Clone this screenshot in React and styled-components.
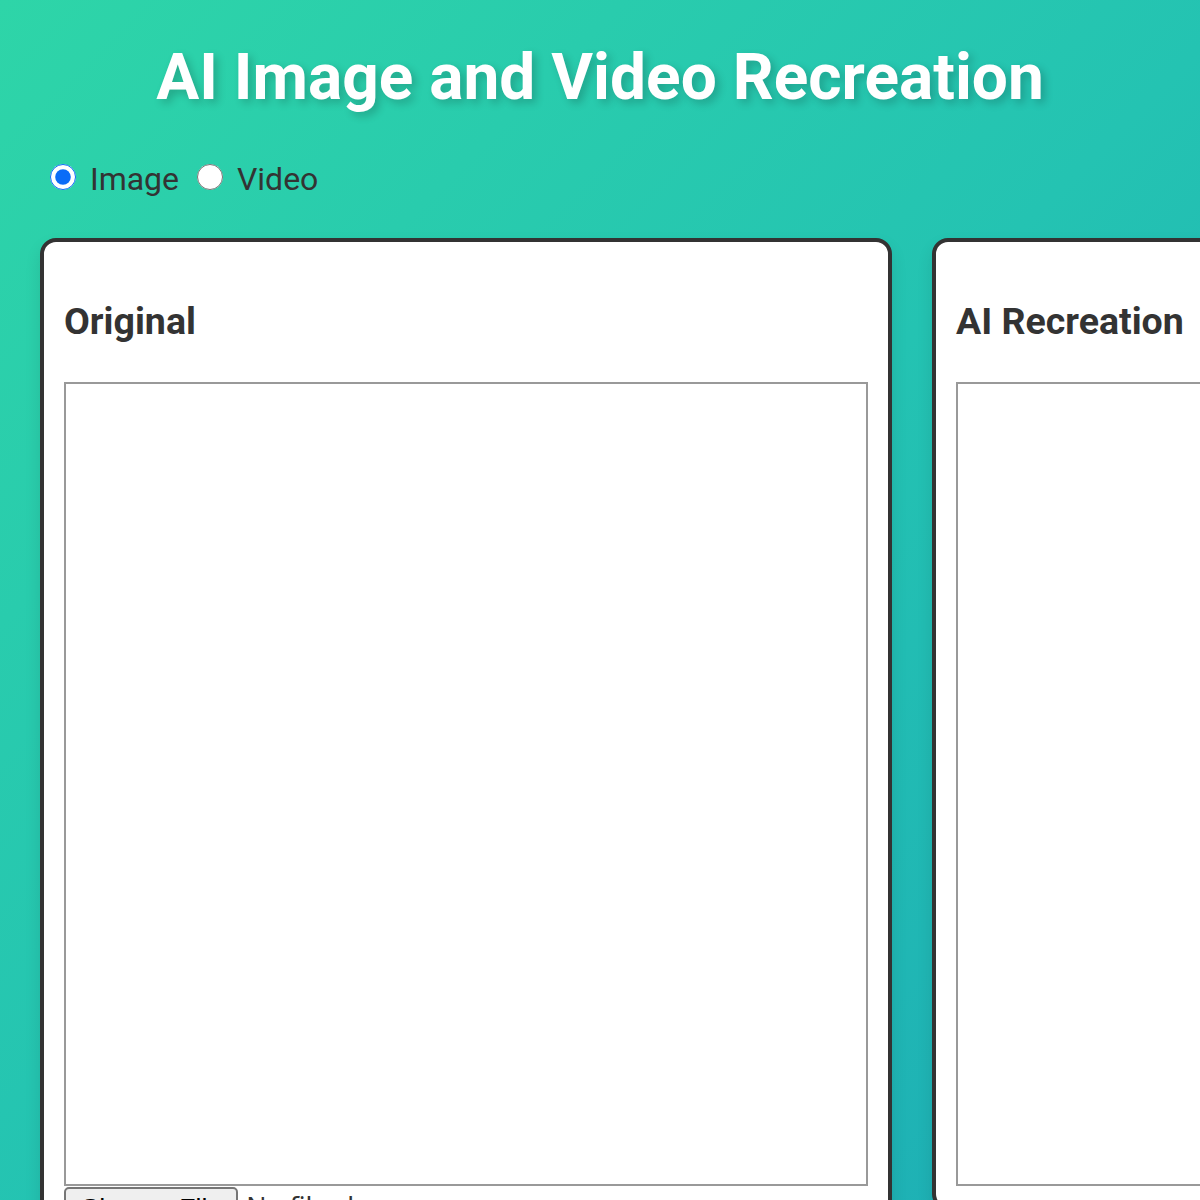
import React, { useState } from 'react';
import styled, { createGlobalStyle } from 'styled-components';

const GlobalStyle = createGlobalStyle`
  html, body {
    margin: 0;
    padding: 0;
    overflow: hidden;
  }

  body {
    font-family: Roboto, "Liberation Sans", Arial, sans-serif;
    color: #333;
  }
`;

const Page = styled.main`
  min-height: 100vh;
  padding: 40px;
  box-sizing: border-box;
  background: linear-gradient(135deg, #2ed5a8 0%, #24c3b2 50%, #1caab6 100%);
`;

const Title = styled.h1`
  margin: 0 0 43px;
  text-align: center;
  font-size: 64px;
  font-weight: 700;
  color: #fff;
  text-shadow: 4px 4px 8px rgba(0, 0, 0, 0.2);
`;

const ModeSwitch = styled.div`
  margin-bottom: 40px;
  font-size: 32px;
  color: #333;
`;

const ModeOption = styled.label`
  cursor: pointer;
`;

const Radio = styled.input.attrs({ type: 'radio' })`
  width: 26px;
  height: 26px;
  margin: 6px 6px 0 10px;
  accent-color: #0b6cf7;
`;

const Panels = styled.div`
  display: flex;
  gap: 40px;
  align-items: flex-start;
`;

const Panel = styled.section`
  flex: 0 0 auto;
  padding: 0 20px 20px;
  background: #fff;
  border: 4px solid #333;
  border-radius: 16px;
  box-shadow: 0 8px 16px rgba(0, 0, 0, 0.1);
`;

const PanelTitle = styled.h3`
  margin: 57px 0 39px;
  font-size: 37.5px;
  font-weight: 700;
  color: #333;
`;

const Canvas = styled.div`
  width: 800px;
  height: 800px;
  border: 2px solid #999;
  background: #fff;
`;

const FileInput = styled.input.attrs({ type: 'file' })`
  display: block;
  zoom: 2;
  margin-top: 0.5px;
  font-family: "Noto Sans", "DejaVu Sans", sans-serif;
`;

export default function App() {
  const [mode, setMode] = useState('image');

  return (
    <>
      <GlobalStyle />
      <Page>
        <Title>AI Image and Video Recreation</Title>

        <ModeSwitch>
          <ModeOption>
            <Radio
              name="mode"
              value="image"
              checked={mode === 'image'}
              onChange={() => setMode('image')}
            />{' '}
            Image
          </ModeOption>{' '}
          <ModeOption>
            <Radio
              name="mode"
              value="video"
              checked={mode === 'video'}
              onChange={() => setMode('video')}
            />{' '}
            Video
          </ModeOption>
        </ModeSwitch>

        <Panels>
          <Panel>
            <PanelTitle>Original</PanelTitle>
            <Canvas />
            <FileInput accept={mode === 'image' ? 'image/*' : 'video/*'} />
          </Panel>
          <Panel>
            <PanelTitle>AI Recreation</PanelTitle>
            <Canvas />
          </Panel>
        </Panels>
      </Page>
    </>
  );
}
